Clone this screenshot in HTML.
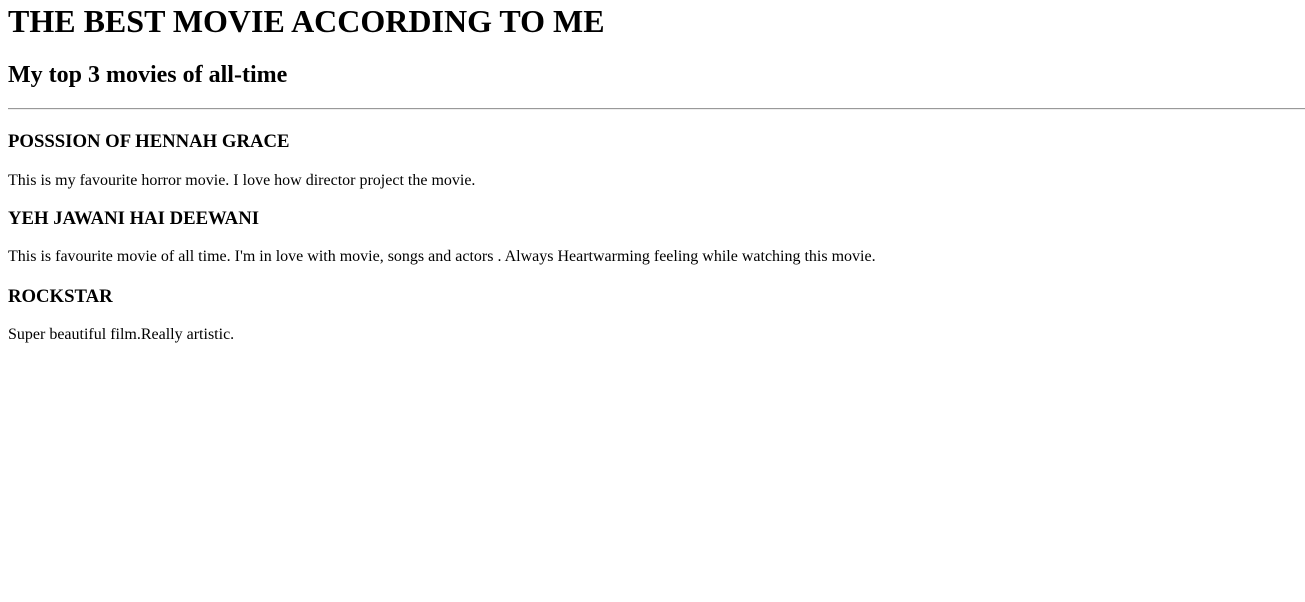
<!DOCTYPE html>
<html><head><meta charset="utf-8"><style>
body{margin:8px;font-family:"Liberation Serif",serif;color:#000;background:#fff}
h1{font-size:32px;margin:-5px 0 0;line-height:37px}
h2{font-size:24px;margin:21px 0 0;line-height:28px}
hr{margin:19px -8px 0 0;border:0;border-top:1px solid #999;border-bottom:1px solid #eee;height:0}
h3{font-size:18.72px;margin:0;line-height:22px}
p{font-size:16px;margin:0;line-height:18px}
.a{margin-top:21px}.b{margin-top:19px}.c{margin-top:18px}.d{margin-top:18px}.e{margin-top:20px}.f{margin-top:18px}
</style></head><body>
<h1>THE BEST MOVIE ACCORDING TO ME</h1>
<h2>My top 3 movies of all-time</h2>
<hr>
<h3 class="a">POSSSION OF HENNAH GRACE</h3>
<p class="b">This is my favourite horror movie. I love how director project the movie.</p>
<h3 class="c">YEH JAWANI HAI DEEWANI</h3>
<p class="d">This is favourite movie of all time. I'm in love with movie, songs and actors . Always Heartwarming feeling while watching this movie.</p>
<h3 class="e">ROCKSTAR</h3>
<p class="f">Super beautiful film.Really artistic.</p>
</body></html>
